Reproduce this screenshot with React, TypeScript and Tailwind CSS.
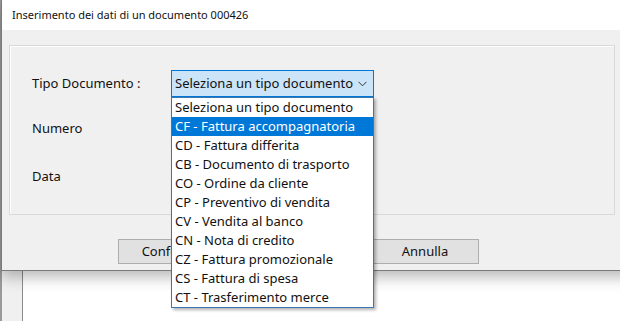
import React from 'react';

const FONT = { fontFamily: '"Noto Sans", "Open Sans", sans-serif' };

const options = [
  'Seleziona un tipo documento',
  'CF - Fattura accompagnatoria',
  'CD - Fattura differita',
  'CB - Documento di trasporto',
  'CO - Ordine da cliente',
  'CP - Preventivo di vendita',
  'CV - Vendita al banco',
  'CN - Nota di credito',
  'CZ - Fattura promozionale',
  'CS - Fattura di spesa',
  'CT - Trasferimento merce',
];

function Chevron() {
  return (
    <svg width="9" height="6" viewBox="0 0 9 6" className="shrink-0">
      <path d="M0.5 0.8 L4.5 4.8 L8.5 0.8" fill="none" stroke="#333" strokeWidth="1" />
    </svg>
  );
}

export default function App() {
  const selected = 1;

  return (
    <div className="relative w-[620px] h-[321px] overflow-hidden bg-white text-black" style={FONT}>
      {/* Window behind the dialog */}
      <div className="flex h-full">
        <div className="w-[2px] bg-[#9a9a9a]" />
        <div className="w-[21px] bg-[#f0f0f0] border-r border-[#8c8c8c]" />
        <div className="flex-1 bg-white" />
      </div>

      {/* Dialog window */}
      <div className="absolute left-[1px] top-0 w-[660px] h-[271px] bg-[#f0f0f0] border-l border-b border-[#7a7a7a] shadow-[0_6px_14px_rgba(0,0,0,0.28)]">
        {/* Title bar */}
        <div className="h-[30px] bg-white flex items-center pl-[10px] text-[11px] text-[#111]">
          Inserimento dei dati di un documento 000426
        </div>

        {/* Group box */}
        <div className="ml-[7px] mt-[15px] w-[606px] h-[170px] border border-[#d9d9d9] shadow-[inset_1px_1px_0_#ffffff] pl-[22px] pt-[24px]">
          <div className="flex items-center h-[27px]">
            <div className="w-[139px] text-[13px] text-[#111]">Tipo Documento :</div>
            <div className="relative">
              <div className="w-[203px] h-[27px] bg-[#cce4f7] border border-[#0078d7] flex items-center justify-between pl-[3px] pr-[6px] text-[13px] text-[#111] whitespace-nowrap">
                <span>Seleziona un tipo documento</span>
                <Chevron />
              </div>
              {/* Open dropdown list */}
              <div className="absolute left-0 top-[27px] w-[203px] bg-white border border-[#3a78b4] shadow-[2px_2px_3px_rgba(0,0,0,0.3)] z-10">
                {options.map((o, i) => (
                  <div
                    key={o}
                    className={
                      'h-[19px] flex items-center pl-[3px] text-[13px] leading-none whitespace-nowrap ' +
                      (i === selected ? 'bg-[#0078d7] text-white' : 'text-[#111]')
                    }
                  >
                    {o}
                  </div>
                ))}
              </div>
            </div>
          </div>
          <div className="flex items-center h-[27px] mt-[18px] text-[13px] text-[#111]">Numero</div>
          <div className="flex items-center h-[27px] mt-[21px] text-[13px] text-[#111]">Data</div>
        </div>

        {/* Buttons */}
        <div className="flex mt-[24px] pl-[116px] gap-[145px]">
          <button className="w-[108px] h-[25px] bg-[#e1e1e1] border border-[#adadad] text-[13px] text-[#111]">
            Conferma
          </button>
          <button className="w-[108px] h-[25px] bg-[#e1e1e1] border border-[#adadad] text-[13px] text-[#111]">
            Annulla
          </button>
        </div>
      </div>
    </div>
  );
}
